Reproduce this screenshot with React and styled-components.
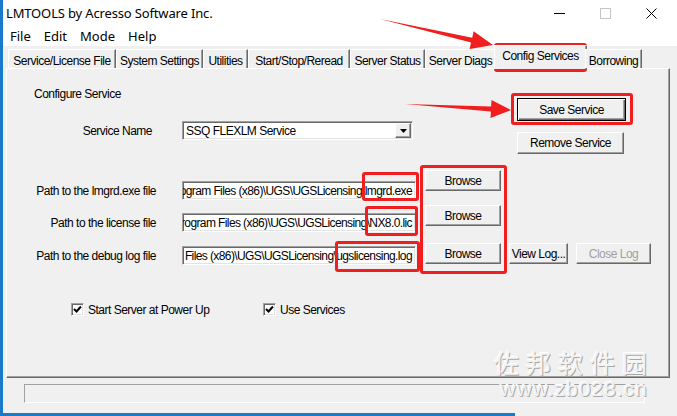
import React from "react";
import styled, { createGlobalStyle } from "styled-components";

const GlobalStyle = createGlobalStyle`
html, body {
  margin: 0;
  padding: 0;
}
body {
  width: 677px;
  height: 416px;
  overflow: hidden;
  background: #f0f0f0;
  font-family: "Liberation Sans", Arial, sans-serif;
}
`

const Screen = styled.div`
position: relative;
width: 677px;
height: 416px;
overflow: hidden;
`

const Window = styled.div`
width: 677px;
height: 416px;
box-sizing: border-box;
border-left: 3px solid #1979ca;
background: #f0f0f0;
display: flex;
flex-direction: column;
`

const TitleBar = styled.div`
height: 26px;
flex-shrink: 0;
background: #fff;
display: flex;
align-items: center;
padding-left: 3px;
font-family: "Noto Sans", sans-serif;
font-size: 13px;
letter-spacing: -0.15px;
color: #000;
`

const TitleText = styled.span`
flex: 1;
`

const Controls = styled.div`
display: flex;
padding-right: 3px;
`

const CtrlButton = styled.div`
width: 46px;
height: 26px;
display: flex;
align-items: center;
justify-content: center;
`

const MenuBar = styled.div`
height: 20px;
flex-shrink: 0;
background: #fff;
display: flex;
align-items: center;
gap: 13px;
padding-left: 7px;
font-family: "Noto Sans", sans-serif;
font-size: 13px;
color: #000;
`

const TabStrip = styled.div`
height: 22px;
flex-shrink: 0;
display: flex;
align-items: flex-end;
padding-left: 5px;
position: relative;
z-index: 1;
font-size: 12px;
letter-spacing: -0.5px;
`

const Tab = styled.div`
box-sizing: border-box;
width: ${({ $w }) => $w}px;
height: ${({ $active }) => ($active ? "24px" : "19px")};
margin: ${({ $active }) => ($active ? "0 -2px -1px -2px" : "0")};
padding-top: ${({ $active }) => ($active ? "3px" : "4px")};
display: flex;
justify-content: center;
background: #f0f0f0;
border-top: 1px solid #fff;
border-left: 1px solid #fff;
border-right: 1px solid #696969;
box-shadow: inset -1px 0 #a0a0a0;
white-space: nowrap;
overflow: hidden;
color: #000;
`

const Panel = styled.div`
box-sizing: border-box;
margin-left: 3px;
width: 664px;
height: 310px;
flex-shrink: 0;
border-top: 1px solid #fff;
border-left: 1px solid #fff;
border-right: 1px solid #696969;
border-bottom: 1px solid #696969;
box-shadow: inset -1px -1px #a0a0a0;
padding-top: 19px;
font-size: 12px;
letter-spacing: -0.5px;
color: #000;
`

const TopSection = styled.div`
display: grid;
grid-template-columns: 510px auto;
align-items: start;
`

const Heading = styled.div`
margin-left: 27px;
line-height: 13px;
`

const ServiceRow = styled.div`
margin-top: 20px;
height: 19px;
display: flex;
align-items: center;
`

const Label = styled.div`
width: ${({ $w }) => $w}px;
text-align: right;
white-space: nowrap;
`

const ButtonStack = styled.div`
display: flex;
flex-direction: column;
align-items: flex-start;
padding-top: 10px;
gap: 11px;
`

const Button = styled.div`
box-sizing: border-box;
width: ${({ $w }) => $w}px;
height: ${({ $h }) => $h || 21}px;
display: flex;
align-items: center;
justify-content: center;
background: #f0f0f0;
white-space: nowrap;
color: ${({ $disabled }) => ($disabled ? "#a0a0a0" : "#000")};
border: 1px solid;
border-color: ${({ $default }) => ($default ? "#000" : "#fff #696969 #696969 #fff")};
box-shadow: ${({ $default }) =>
        $default
            ? "inset 1px 1px #fff, inset -1px -1px #696969, inset -2px -2px #a0a0a0"
            : "inset -1px -1px #a0a0a0"};
`

const Sunken = styled.div`
box-sizing: border-box;
background: #fff;
border: 1px solid;
border-color: #a0a0a0 #fff #fff #a0a0a0;
box-shadow: inset 1px 1px #696969, inset -1px -1px #e3e3e3;
`

const Combo = styled(Sunken)`
margin-left: 30px;
width: 231px;
height: 19px;
display: flex;
align-items: center;
padding-left: 3px;
`

const ComboText = styled.span`
flex: 1;
`

const DropButton = styled.div`
box-sizing: border-box;
width: 16px;
height: 15px;
margin-right: 1px;
display: flex;
align-items: center;
justify-content: center;
background: #f0f0f0;
border: 1px solid;
border-color: #fff #696969 #696969 #fff;
box-shadow: inset -1px -1px #a0a0a0;
`

const PathsSection = styled.div`
display: flex;
align-items: flex-start;
`

const FieldsColumn = styled.div`
display: flex;
flex-direction: column;
`

const FieldRow = styled.div`
margin-top: ${({ $top }) => $top}px;
height: 19px;
display: flex;
align-items: center;
`

const PathBox = styled(Sunken)`
margin-left: 26px;
width: 234px;
height: 19px;
display: flex;
justify-content: flex-end;
align-items: center;
overflow: hidden;
padding-right: 3px;
letter-spacing: -0.6px;
`

const PathText = styled.span`
flex-shrink: 0;
white-space: nowrap;
`

const ButtonsColumn = styled.div`
margin-left: 9px;
display: flex;
flex-direction: column;
`

const ButtonRow = styled.div`
margin-top: ${({ $top }) => $top}px;
display: flex;
gap: 8px;
`

const CheckRow = styled.div`
margin-top: 38px;
padding-left: 64px;
display: grid;
grid-template-columns: 192px auto;
`

const CheckGroup = styled.label`
display: flex;
align-items: center;
gap: 4px;
height: 13px;
`

const CheckBox = styled(Sunken)`
width: 13px;
height: 13px;
display: flex;
align-items: center;
justify-content: center;
`

const StatusBar = styled.div`
box-sizing: border-box;
margin: 6px 0 0 21px;
width: 621px;
height: 19px;
flex-shrink: 0;
border: 1px solid;
border-color: #a0a0a0 #fff #fff #a0a0a0;
`

const BottomEdge = styled.div`
margin-top: auto;
height: 3px;
width: 512px;
background: #1979ca;
`

/* annotation layer drawn over the dialog */
const RedBox = styled.div`
position: absolute;
left: ${({ $x }) => $x}px;
top: ${({ $y }) => $y}px;
width: ${({ $w }) => $w}px;
height: ${({ $h }) => $h}px;
box-sizing: border-box;
border: 3px solid #f01e1e;
border-radius: 3px;
pointer-events: none;
`

const Arrows = styled.svg`
position: absolute;
left: 0;
top: 0;
pointer-events: none;
`

const Watermark = styled.div`
position: absolute;
left: 494px;
top: 345px;
display: flex;
flex-direction: column;
align-items: center;
white-space: nowrap;
color: #f3f3f3;
text-shadow: 1px 1px 0 #a9a9a9, -1px -1px 0 #ffffff, 0 0 1px #b5b5b5;
pointer-events: none;
`

const WmCn = styled.div`
font-family: "Noto Sans CJK SC", sans-serif;
font-size: 25px;
letter-spacing: 7px;
line-height: 34px;
`

const WmUrl = styled.div`
font-family: "Liberation Sans", sans-serif;
font-size: 21px;
letter-spacing: 1px;
line-height: 20px;
`

const tabs = [
    { name: "Service/License File", w: 108 },
    { name: "System Settings", w: 87 },
    { name: "Utilities", w: 45 },
    { name: "Start/Stop/Reread", w: 102 },
    { name: "Server Status", w: 75 },
    { name: "Server Diags", w: 71 },
    { name: "Config Services", w: 93, active: true },
    { name: "Borrowing", w: 57 },
];

const paths = [
    { label: "Path to the lmgrd.exe file", value: "C:\\Program Files (x86)\\UGS\\UGSLicensing\\lmgrd.exe", top: 27 },
    { label: "Path to the license file", value: "C:\\Program Files (x86)\\UGS\\UGSLicensing\\NX8.0.lic", top: 13 },
    { label: "Path to the debug log file", value: "C:\\Program Files (x86)\\UGS\\UGSLicensing\\ugslicensing.log", top: 14 },
];

const Check = () => (
    <svg width="9" height="9" viewBox="0 0 9 9">
        <path d="M1 4 L3.5 6.5 L8 1.5" stroke="#000" strokeWidth="2" fill="none" />
    </svg>
)

const App = () => {
    return (
        <Screen>
            <GlobalStyle />
            <Window>
                <TitleBar>
                    <TitleText>LMTOOLS by Acresso Software Inc.</TitleText>
                    <Controls>
                        <CtrlButton>
                            <svg width="11" height="11"><path d="M0 5.5 H11" stroke="#000" /></svg>
                        </CtrlButton>
                        <CtrlButton>
                            <svg width="11" height="11"><rect x="0.5" y="0.5" width="10" height="10" stroke="#c4c4c4" fill="none" /></svg>
                        </CtrlButton>
                        <CtrlButton>
                            <svg width="11" height="11"><path d="M0.5 0.5 L10.5 10.5 M10.5 0.5 L0.5 10.5" stroke="#000" /></svg>
                        </CtrlButton>
                    </Controls>
                </TitleBar>
                <MenuBar>
                    <span>File</span>
                    <span>Edit</span>
                    <span>Mode</span>
                    <span>Help</span>
                </MenuBar>
                <TabStrip>
                    {tabs.map(t => <Tab key={t.name} $w={t.w} $active={t.active}>{t.name}</Tab>)}
                </TabStrip>
                <Panel>
                    <TopSection>
                        <div>
                            <Heading>Configure Service</Heading>
                            <ServiceRow>
                                <Label $w={145}>Service Name</Label>
                                <Combo>
                                    <ComboText>SSQ FLEXLM Service</ComboText>
                                    <DropButton>
                                        <svg width="7" height="4"><path d="M0 0 H7 L3.5 4 Z" fill="#000" /></svg>
                                    </DropButton>
                                </Combo>
                            </ServiceRow>
                        </div>
                        <ButtonStack>
                            <Button $w={109} $h={23} $default>Save Service</Button>
                            <Button $w={107} $h={22}>Remove Service</Button>
                        </ButtonStack>
                    </TopSection>
                    <PathsSection>
                        <FieldsColumn>
                            {paths.map(p => (
                                <FieldRow key={p.label} $top={p.top}>
                                    <Label $w={149}>{p.label}</Label>
                                    <PathBox><PathText>{p.value}</PathText></PathBox>
                                </FieldRow>
                            ))}
                        </FieldsColumn>
                        <ButtonsColumn>
                            <ButtonRow $top={16}><Button $w={76}>Browse</Button></ButtonRow>
                            <ButtonRow $top={14}><Button $w={76}>Browse</Button></ButtonRow>
                            <ButtonRow $top={17}>
                                <Button $w={76}>Browse</Button>
                                <Button $w={59}>View Log...</Button>
                                <Button $w={75} $disabled>Close Log</Button>
                            </ButtonRow>
                        </ButtonsColumn>
                    </PathsSection>
                    <CheckRow>
                        <CheckGroup><CheckBox><Check /></CheckBox>Start Server at Power Up</CheckGroup>
                        <CheckGroup><CheckBox><Check /></CheckBox>Use Services</CheckGroup>
                    </CheckRow>
                </Panel>
                <StatusBar />
                <BottomEdge />
            </Window>

            <RedBox $x={494} $y={43} $w={93} $h={29} />
            <RedBox $x={511} $y={93} $w={122} $h={32} />
            <RedBox $x={362} $y={172} $w={57} $h={29} />
            <RedBox $x={365} $y={206} $w={53} $h={30} />
            <RedBox $x={335} $y={241} $w={85} $h={31} />
            <RedBox $x={420} $y={165} $w={87} $h={109} />

            <Arrows width="677" height="416">
                <polygon fill="#f01e1e" points="380,19 472.2,37.7 473.6,31.3 493,45 469.6,48.9 471,42.5" />
                <polygon fill="#f01e1e" points="405,104 491.1,106.4 491.5,99.9 511,110 490.5,117.9 490.9,111.4" />
            </Arrows>

            <Watermark>
                <WmCn>佐邦软件园</WmCn>
                <WmUrl>www.zb028.cn</WmUrl>
            </Watermark>
        </Screen>
    )
};

export default App;
